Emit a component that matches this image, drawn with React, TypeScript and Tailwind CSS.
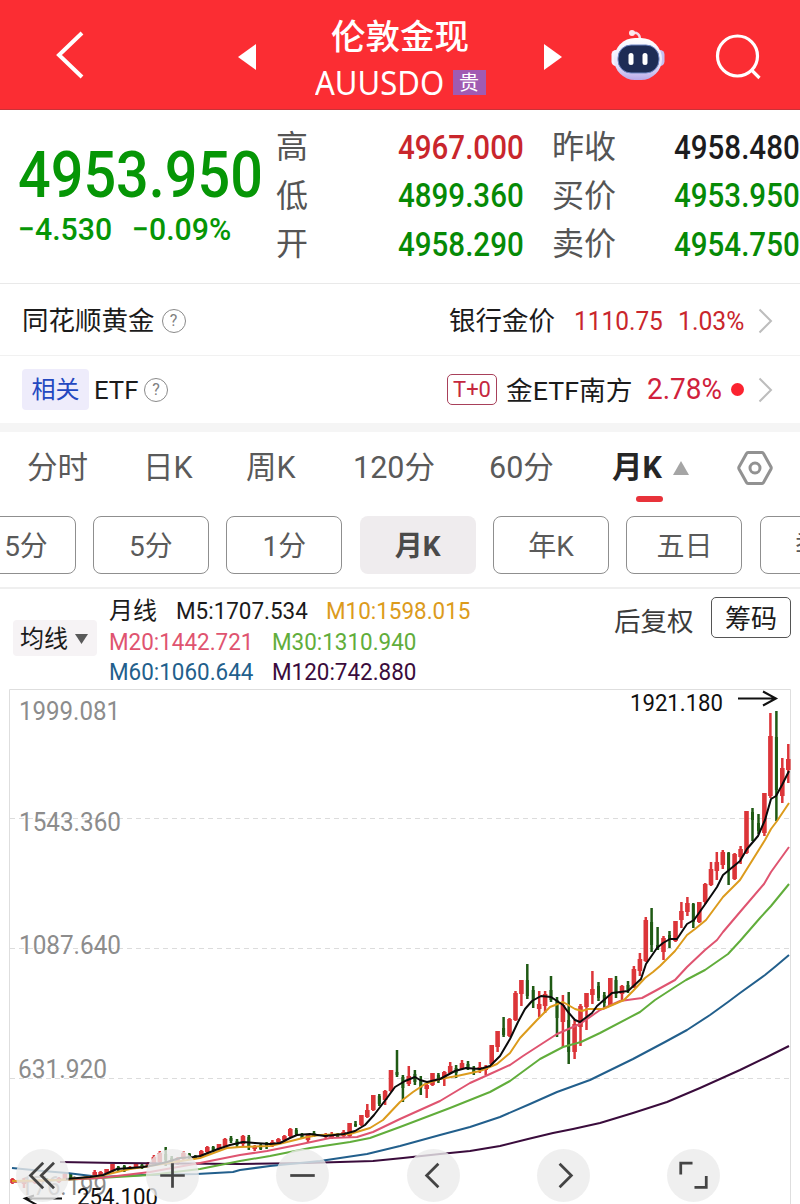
import React from "react";

type Candle = [number, number, number, number, number, "r" | "g"];

// x, high, body top, body bottom, low, direction
const candles: Candle[] = [
  [788.3, 744, 759, 770, 783, "r"], [782.3, 758, 768, 796, 803, "r"], [776.4, 711, 737, 790, 821, "g"],
  [770.4, 713, 736, 796, 798, "r"], [764.4, 793, 793, 833, 836, "r"], [758.5, 814, 823, 831, 834, "g"],
  [752.5, 808, 812, 820, 841, "g"], [746.5, 811, 811, 853, 854, "r"], [740.6, 846, 849, 857, 864, "r"],
  [734.6, 853, 854, 879, 880, "r"], [728.6, 852, 853, 870, 885, "g"], [722.8, 850, 852, 865, 869, "r"],
  [716.8, 852, 862, 871, 880, "r"], [711, 862, 869, 885, 886, "r"], [705.2, 883, 884, 902, 904, "r"],
  [699.3, 902, 902, 922, 923, "r"], [693.3, 903, 904, 922, 928, "g"], [687.4, 897, 903, 912, 916, "r"],
  [681.4, 902, 911, 920, 928, "r"], [675.5, 921, 921, 941, 942, "r"], [669.5, 931, 935, 940, 948, "g"],
  [663.5, 936, 938, 952, 960, "r"], [657.6, 927, 945, 950, 950, "g"], [651.6, 908, 922, 945, 952, "g"],
  [645.8, 917, 920, 961, 962, "r"], [639.9, 953, 959, 971, 976, "r"], [633.9, 966, 969, 987, 988, "r"],
  [628, 981, 985, 990, 993, "g"], [622, 985, 986, 994, 1000, "r"], [616, 976, 980, 994, 998, "g"],
  [610.3, 978, 978, 1005, 1006, "r"], [604.3, 992, 995, 1003, 1008, "g"], [598.5, 982, 986, 998, 1001, "g"],
  [592.4, 971, 989, 995, 1004, "r"], [586.5, 993, 993, 1007, 1030, "r"], [580.5, 1004, 1006, 1027, 1046, "r"],
  [574.6, 1020, 1024, 1052, 1059, "r"], [568.7, 992, 1020, 1052, 1064, "g"], [562.9, 995, 1005, 1022, 1047, "r"],
  [557, 997, 1000, 1018, 1037, "g"], [551, 976, 990, 1000, 1002, "g"], [545.1, 991, 994, 1006, 1013, "r"],
  [539.2, 991, 1004, 1009, 1017, "r"], [533.2, 986, 990, 1000, 1008, "g"], [527.3, 964, 980, 996, 999, "g"],
  [521.4, 980, 980, 994, 1006, "r"], [515.5, 991, 993, 1020, 1021, "r"], [509.5, 1018, 1019, 1036, 1037, "r"],
  [503.6, 1017, 1028, 1035, 1037, "g"], [497.6, 1031, 1031, 1047, 1052, "r"], [491.7, 1045, 1045, 1064, 1065, "r"],
  [485.7, 1065, 1067, 1070, 1075, "r"], [479.8, 1062, 1067, 1069, 1073, "r"], [473.8, 1066, 1068, 1072, 1075, "g"],
  [468, 1061, 1064, 1068, 1070, "g"], [462, 1060, 1063, 1069, 1070, "r"], [456.1, 1065, 1068, 1073, 1078, "g"],
  [450.2, 1062, 1066, 1073, 1074, "r"], [444.3, 1071, 1072, 1077, 1086, "r"], [438.4, 1073, 1075, 1081, 1083, "g"],
  [432.5, 1073, 1073, 1085, 1086, "r"], [426.7, 1083, 1085, 1089, 1098, "r"], [420.8, 1076, 1080, 1088, 1095, "g"],
  [414.9, 1070, 1074, 1082, 1085, "g"], [408.8, 1066, 1076, 1084, 1086, "r"], [402.9, 1075, 1077, 1088, 1102, "g"],
  [397, 1050, 1072, 1075, 1077, "g"], [391, 1070, 1070, 1091, 1092, "r"], [385.1, 1090, 1091, 1100, 1105, "r"],
  [379.3, 1094, 1096, 1104, 1106, "g"], [373.3, 1095, 1095, 1110, 1111, "r"], [367.3, 1104, 1110, 1117, 1118, "r"],
  [361.4, 1115, 1115, 1125, 1126, "r"], [355.5, 1121, 1124, 1126, 1127, "g"], [349.6, 1123, 1123, 1136, 1137, "r"],
  [343.6, 1130, 1132, 1136, 1137, "r"], [337.7, 1133, 1134, 1137, 1138, "g"], [331.7, 1132, 1134, 1138, 1139, "r"],
  [325.7, 1133, 1134, 1137, 1138, "r"], [314, 1131, 1133, 1136, 1137, "g"], [308, 1134, 1135, 1140, 1142, "r"],
  [302, 1133, 1134, 1138, 1139, "g"], [296.3, 1128, 1130, 1134, 1136, "g"], [290.3, 1128, 1129, 1136, 1137, "r"],
  [284.4, 1135, 1136, 1140, 1142, "r"], [278.4, 1138, 1139, 1142, 1143, "r"], [272.4, 1140, 1142, 1146, 1147, "r"],
  [266.6, 1142, 1143, 1147, 1149, "g"], [260.7, 1144, 1145, 1149, 1150, "g"], [254.7, 1145, 1146, 1149, 1151, "r"],
  [248.8, 1135, 1137, 1146, 1150, "g"], [243, 1135, 1136, 1144, 1146, "r"], [237, 1139, 1141, 1145, 1147, "g"],
  [231, 1136, 1138, 1141, 1143, "g"], [225, 1138, 1139, 1146, 1147, "r"], [219, 1144, 1144, 1149, 1151, "r"],
  [213.2, 1146, 1147, 1150, 1152, "g"], [207.3, 1146, 1147, 1152, 1154, "r"], [201.3, 1150, 1151, 1156, 1157, "r"],
  [195.4, 1155, 1156, 1158, 1159, "g"], [189.4, 1153, 1154, 1157, 1159, "g"], [183.4, 1151, 1153, 1159, 1161, "r"],
  [177.6, 1157, 1158, 1163, 1165, "r"], [171.7, 1156, 1158, 1163, 1167, "g"], [165.7, 1147, 1154, 1160, 1166, "g"],
  [159.8, 1151, 1153, 1162, 1164, "r"], [153.9, 1155, 1157, 1165, 1166, "r"], [148, 1162, 1163, 1166, 1168, "r"],
  [142, 1164, 1165, 1168, 1169, "g"], [136, 1163, 1164, 1168, 1169, "r"], [130, 1166, 1167, 1169, 1170, "r"],
  [124.3, 1165, 1166, 1169, 1172, "g"], [118.3, 1166, 1167, 1169, 1171, "g"], [112.5, 1164, 1164, 1171, 1172, "r"],
  [106.6, 1169, 1169, 1173, 1174, "r"], [100.6, 1171, 1172, 1175, 1176, "r"], [94.7, 1170, 1172, 1175, 1176, "r"],
  [88.7, 1175, 1176, 1178, 1179, "r"], [70.8, 1173, 1174, 1179, 1180, "g"], [64.9, 1172, 1174, 1179, 1181, "r"],
  [58.9, 1177, 1178, 1182, 1183, "r"], [47, 1178, 1179, 1182, 1183, "g"], [35, 1179, 1180, 1183, 1184, "r"],
  [24, 1178, 1180, 1184, 1188, "r"], [12.5, 1178, 1179, 1183, 1184, "r"],
];

const averages = [
  {
    color: "#3a0c3c",
    points:
      "60,1162 117,1163 240,1164 307,1163 373,1161 403,1158 440,1154 470,1151 500,1146 528,1139 553,1133 573,1129 600,1123 633,1113 667,1102 700,1088 740,1070 765,1058 775,1053 789,1046",
  },
  {
    color: "#225f8c",
    points:
      "12,1168 43,1171 67,1173 100,1177 143,1175 197,1174 233,1172 240,1170 270,1166 320,1161 367,1154 400,1146 440,1135 470,1127 500,1117 530,1104 557,1092 590,1080 633,1059 665,1042 687,1030 710,1015 728,1002 740,993 765,975 776,966 789,955",
  },
  {
    color: "#61ad3b",
    points:
      "12,1182 60,1180 100,1178 150,1175 200,1169 240,1161 270,1156 310,1148 350,1142 370,1138 400,1127 450,1108 470,1100 490,1092 510,1081 525,1070 540,1059 563,1047 581,1042 600,1033 640,1012 655,1000 675,987 686,980 705,970 728,954 740,941 760,918 771,906 789,884",
  },
  {
    color: "#df5470",
    points:
      "12,1182 100,1178 150,1172 200,1163 240,1155 267,1151 297,1145 330,1138 357,1137 373,1132 400,1119 440,1101 470,1083 490,1074 510,1065 523,1056 540,1045 557,1034 580,1024 600,1010 620,1001 642,998 655,991 675,980 687,967 705,950 717,940 723,932 740,912 764,884 771,872 789,847",
  },
  {
    color: "#dc9b1c",
    points:
      "12,1181 60,1180 100,1176 130,1169 150,1166 175,1162 200,1158 227,1148 240,1147 270,1146 283,1143 307,1137 320,1135 350,1134 370,1128 383,1120 400,1102 413,1092 425,1084 440,1079 457,1076 480,1071 497,1064 510,1053 520,1038 537,1020 550,1007 563,1002 575,1009 582,1011 588,1009 603,1009 624,1000 633,991 645,978 653,972 660,966 675,951 687,935 695,929 706,920 723,897 740,880 765,840 771,829 777,821 789,803",
  },
  {
    color: "#0b0b0b",
    points:
      "66,1179 90,1177 103,1175 117,1169 143,1167 155,1165 167,1162 180,1158 193,1157 200,1156 218,1149 230,1145 243,1142 255,1143 270,1144 280,1143 290,1138 297,1135 310,1134 325,1136 344,1134 355,1131 365,1125 374,1115 387,1098 395,1087 405,1081 415,1077 420,1080 427,1082 440,1079 455,1071 466,1068 480,1069 490,1066 500,1056 510,1039 518,1022 525,1009 532,1001 541,996 551,997 557,1001 563,1005 568,1012 575,1020 580,1022 592,1013 597,1006 612,993 628,991 641,979 646,964 657,948 663,943 670,939 677,939 687,924 694,920 706,903 717,887 723,875 740,861 747,849 758,836 765,820 771,799 776,796 782,785 789,771",
  },
];

const tabs = ["分时", "日K", "周K", "120分", "60分"];
const periods = ["5分", "5分", "1分", "月K", "年K", "五日", "季K"];

const quotes = [
  ["高", "4967.000", "text-[#c9262c]", "昨收", "4958.480", "text-[#1c1c1e]"],
  ["低", "4899.360", "text-[#068a06]", "买价", "4953.950", "text-[#068a06]"],
  ["开", "4958.290", "text-[#068a06]", "卖价", "4954.750", "text-[#068a06]"],
];

const Header = () => (
  <header className="flex h-[110px] items-center border-b border-[#c83238] bg-[#fb2d33] text-white">
    <svg className="ml-[54px]" width="32" height="50" viewBox="0 0 32 50" fill="none" stroke="white" strokeWidth="4">
      <path d="M28 3 5 25l23 22" />
    </svg>
    <svg className="ml-[152px] mt-1" width="18" height="26" viewBox="0 0 18 26" fill="white">
      <path d="M0 13 18 0v26z" />
    </svg>
    <div className="flex w-[288px] flex-col items-center pt-[10px]">
      <h1 className="h-[46px] text-[34.500px] leading-[46px] font-medium">伦敦金现</h1>
      <div className="flex h-[46px] items-center gap-[9px]">
        <span className="w-[129px] text-[32px] leading-none font-['Noto_Sans','Noto_Sans_CJK_SC',sans-serif]">
          <span className="inline-block origin-left scale-x-[0.97]">AUUSDO</span>
        </span>
        <span className="flex h-[25px] w-[33px] items-center justify-center bg-[#a05bb2] text-[20px]">贵</span>
      </div>
    </div>
    <svg className="mt-1" width="18" height="26" viewBox="0 0 18 26" fill="white">
      <path d="M18 13 0 0v26z" />
    </svg>
    <Robot />
    <svg className="ml-[48px] mt-[3px]" width="48" height="48" viewBox="0 0 48 48" fill="none" stroke="white" strokeWidth="3.2">
      <circle cx="23.500" cy="24" r="20" />
      <path d="m37 37.500 8.500 8.500" />
    </svg>
  </header>
);

const Robot = () => (
  <svg className="ml-[48px]" width="56" height="54" viewBox="0 0 56 54">
    <defs>
      <linearGradient id="shell" x1="0" y1="0" x2="0" y2="1">
        <stop offset="0" stopColor="#fff" />
        <stop offset="0.65" stopColor="#e6e2fa" />
        <stop offset="1" stopColor="#b7a8e8" />
      </linearGradient>
    </defs>
    <path d="M22 5c5-1 8 1 8 7" fill="none" stroke="#f3dcea" strokeWidth="2.500" />
    <circle cx="22" cy="5" r="3" fill="#fde9ee" />
    <rect x="1.500" y="22" width="9" height="16" rx="4.500" fill="#f4f2ff" />
    <rect x="45.500" y="22" width="9" height="16" rx="4.500" fill="#c5bff0" />
    <rect x="4" y="10" width="48" height="42" rx="21" fill="url(#shell)" />
    <rect x="8" y="17" width="41" height="28" rx="13" fill="#1e2c55" stroke="#6f86c4" strokeWidth="1" />
    <rect x="18.500" y="25" width="5" height="12" rx="2.500" fill="white" />
    <rect x="32.500" y="25" width="5" height="12" rx="2.500" fill="white" />
  </svg>
);

const Help = () => (
  <span className="flex h-6 w-6 items-center justify-center rounded-full border border-[#8a8a8a] text-[16px] leading-none text-[#808080]">
    ?
  </span>
);

const Arrow = () => (
  <svg width="15" height="26" viewBox="0 0 15 26" fill="none" stroke="#bdbdbd" strokeWidth="2">
    <path d="m1.500 1.500 11.500 11.500-11.500 11.500" />
  </svg>
);

const Quote = () => (
  <section className="flex h-[174px] border-b border-[#e9e9e9]">
    <div className="w-[276px] pl-[18px] font-medium text-[#069606]">
      <div className="mt-[25px] h-[78px] pt-[1px] text-[65px] leading-[78px]">
        <span className="inline-block origin-left scale-x-[0.885]">4953.950</span>
      </div>
      <div className="flex h-[34px] text-[31.500px] leading-[34px]">
        <span className="w-[114px]">
          <span className="inline-block origin-left scale-x-[0.96]">−4.530</span>
        </span>
        <span className="inline-block origin-left scale-x-[0.96]">−0.09%</span>
      </div>
    </div>
    <div className="flex flex-col pt-[13px]">
      {quotes.map(([a, av, ac, b, bv, bc]) => (
        <div key={a} className="flex h-[48.500px] items-center text-[32px] text-[#555]">
          <span className="w-[122px]">{a}</span>
          <span className={`w-[126px] text-[33px] font-medium ${ac}`}>
            <span className="inline-block origin-left scale-x-[0.895]">{av}</span>
          </span>
          <span className="ml-[28px] w-[122px]">{b}</span>
          <span className={`w-[126px] text-[33px] font-medium ${bc}`}>
            <span className="inline-block origin-left scale-x-[0.895]">{bv}</span>
          </span>
        </div>
      ))}
    </div>
  </section>
);

const Related = () => (
  <section className="border-b-[9px] border-[#f5f5f5]">
    <div className="flex h-[72px] items-center border-b border-[#f1f1f1] pt-[2px] pr-[27px] pl-[22px] text-[26.500px] text-[#1b1b1b]">
      <span className="mr-[7px]">同花顺黄金</span>
      <Help />
      <span className="ml-auto">银行金价</span>
      <span className="ml-[19px] w-[104px] pt-[2px] text-[26px] text-[#c9262c]">
        <span className="inline-block origin-left scale-x-[0.94]">1110.75</span>
      </span>
      <span className="w-[67px] pt-[2px] text-[26px] text-[#c9262c]">
        <span className="inline-block origin-left scale-x-[0.95]">1.03%</span>
      </span>
      <span className="ml-[13px]">
        <Arrow />
      </span>
    </div>
    <div className="flex h-[67px] items-center pr-[27px] pl-[22px] text-[26.500px] text-[#1b1b1b]">
      <span className="mr-[5px] flex h-[41px] w-[67px] items-center justify-center rounded bg-[#eeecfb] pt-[1px] text-[24px] text-[#2448c0]">
        相关
      </span>
      <span className="mr-[5px] w-[45px] pt-[1px]">
        <span className="inline-block origin-left scale-x-[0.97]">ETF</span>
      </span>
      <Help />
      <span className="mr-[9px] ml-auto flex h-[31px] w-[50px] items-center justify-center rounded-[5px] border border-[#a8405a] text-[22px] text-[#c5283f]">
        T+0
      </span>
      <span className="w-[127px] pt-[2px]">
        <span className="inline-block origin-left scale-x-[1.01] whitespace-nowrap">金ETF南方</span>
      </span>
      <span className="ml-[14px] w-[84px] text-[29px] text-[#d0213c]">
        <span className="inline-block origin-left scale-x-[0.965]">2.78%</span>
      </span>
      <span className="mr-[14px] h-[13px] w-[13px] rounded-full bg-[#fb2330]" />
      <Arrow />
    </div>
  </section>
);

const Tabs = () => (
  <nav className="grid h-[84px] grid-cols-[116px_103px_107px_136px_123px_125px_36px] pt-[10px] pl-[27px] text-[30.500px] leading-[52px] text-[#5a5a5a]">
    {tabs.map((tab) => (
      <span key={tab}>{tab}</span>
    ))}
    <div>
      <div className="flex items-center">
        <span className="w-[61px] font-bold text-[#262626]">月K</span>
        <svg width="16" height="14" viewBox="0 0 16 14" fill="#a5a5a5">
          <path d="m8 0 8 14H0z" />
        </svg>
      </div>
      <div className="mt-[2px] ml-[24px] h-[6px] w-[27px] rounded-full bg-[#e8323a]" />
    </div>
    <svg className="mt-[8px]" width="36" height="36" viewBox="0 0 36 36" fill="none" stroke="#929292" strokeWidth="3">
      <path d="M11 2.500h14q1 0 1.500 1L34 17q.5 1 0 2l-7.500 13.500q-.5 1-1.500 1H11q-1 0-1.500-1L2 19q-.5-1 0-2L9.500 3.500q.5-1 1.500-1z" />
      <circle cx="18" cy="18" r="5" />
    </svg>
  </nav>
);

const Periods = () => (
  <div className="h-[73px] overflow-hidden border-b-2 border-[#efefef]">
    <div className="-ml-[40.500px] flex w-max gap-[17.400px] text-[28px] text-[#5a5a5a]">
      {periods.map((p, i) => (
        <button
          key={i}
          className={
            i === 3
              ? "h-[58px] w-[116px] rounded-lg bg-[#efecee] pt-[3px] font-bold text-[#4a4a4a]"
              : `h-[58px] w-[116px] rounded-lg border border-[#8f8f8f] pt-[3px] ${i === 0 ? "pl-[17px]" : ""}`
          }
        >
          {p}
        </button>
      ))}
    </div>
  </div>
);

const Legend = () => (
  <div className="flex h-[100px] pl-[13px] text-[24px] text-[#1b1b1b]">
    <div className="mt-[31px] flex h-[36px] w-[84px] items-center gap-[7px] rounded bg-[#f6f3f5] pt-[1px] pl-[7px]">
      <span>均线</span>
      <svg width="13" height="10" viewBox="0 0 13 10" fill="#595959">
        <path d="M0 0h13L6.500 10z" />
      </svg>
    </div>
    <div className="ml-[12px] w-[400px] pt-[7px] leading-[30.500px]">
      <div className="flex">
        <span className="w-[67px]">月线</span>
        <span className="w-[150px]">
          <span className="inline-block origin-left scale-x-[0.935]">M5:1707.534</span>
        </span>
        <span className="inline-block origin-left scale-x-[0.935] text-[#dc9b1c]">M10:1598.015</span>
      </div>
      <div className="flex">
        <span className="w-[163px] text-[#df5470]">
          <span className="inline-block origin-left scale-x-[0.935]">M20:1442.721</span>
        </span>
        <span className="inline-block origin-left scale-x-[0.935] text-[#61ad3b]">M30:1310.940</span>
      </div>
      <div className="flex">
        <span className="w-[163px] text-[#225f8c]">
          <span className="inline-block origin-left scale-x-[0.935]">M60:1060.644</span>
        </span>
        <span className="inline-block origin-left scale-x-[0.935] text-[#3a0c3c]">M120:742.880</span>
      </div>
    </div>
    <span className="mt-[13px] ml-[105px] w-[80px] text-[26.500px] leading-[40px] text-[#3c3c3c]">后复权</span>
    <button className="mt-[8px] ml-[17px] h-[41px] w-[80px] rounded-[5px] border border-[#555] pt-[2px] text-[26px] leading-none">
      筹码
    </button>
  </div>
);

const Chart = () => (
  <svg className="block" width="800" height="515" viewBox="0 689 800 515">
    <path d="M9.500 1204V689.500H790.500V1204" fill="none" stroke="#dedede" />
    <g stroke="#dcdcdc" strokeDasharray="5 4">
      <path d="M10 818.500H790M10 948.500H790M10 1078.500H790" />
    </g>
    <g fill="#8c8c8c" fontSize="25.500">
      <text x="19" y="720" textLength="101" lengthAdjust="spacingAndGlyphs">1999.081</text>
      <text x="19" y="831" textLength="102" lengthAdjust="spacingAndGlyphs">1543.360</text>
      <text x="19" y="954" textLength="102" lengthAdjust="spacingAndGlyphs">1087.640</text>
      <text x="18" y="1078" textLength="89" lengthAdjust="spacingAndGlyphs">631.920</text>
      <text x="20" y="1195" textLength="87" lengthAdjust="spacingAndGlyphs">176.199</text>
    </g>
    {candles.map(([x, high, top, bottom, low, dir]) => (
      <g key={x} fill={dir === "r" ? "#dc3539" : "#1f5a14"}>
        <rect x={x - 1.25} y={high} width="2.500" height={low - high} />
        <rect
          x={dir === "r" ? x - 2.3 : x - 1.5}
          y={top}
          width={dir === "r" ? 4.6 : 3}
          height={bottom - top}
        />
      </g>
    ))}
    {averages.map((line) => (
      <polyline
        key={line.color}
        points={line.points}
        fill="none"
        stroke={line.color}
        strokeWidth="2"
        strokeLinejoin="round"
      />
    ))}
    <g fill="none" stroke="#111" strokeWidth="2">
      <path d="M738 698.500h38M763 691.500l13 7-13 7" />
      <path d="M62 1198.500H25M37 1205l-12-6.500 9-3" />
    </g>
    <g fill="#111" fontSize="24">
      <text x="630" y="711" textLength="93" lengthAdjust="spacingAndGlyphs">1921.180</text>
      <text x="77" y="1205" textLength="81" lengthAdjust="spacingAndGlyphs">254.100</text>
    </g>
  </svg>
);

const controls = [
  "M42 14 29 27l13 13M53 14 40 27l13 13",
  "M14.500 27h25M27 14.500v25",
  "M14.500 27h25",
  "M32 15 20 27l12 12",
  "M23 15l12 12-12 12",
  "M14 26V14.500h12M28 39h12V27.500",
];

const Controls = () => (
  <div className="absolute bottom-[2px] left-[16px] flex gap-[77.200px]">
    {controls.map((d, i) => (
      <button key={i} className="h-[53px] w-[53px] rounded-full bg-[#ebebeb]/80">
        <svg
          className={i === 0 ? "-ml-[14px]" : ""}
          width="53"
          height="53"
          viewBox="0 0 54 54"
          fill="none"
          stroke="#444"
          strokeWidth="2.800"
        >
          <path d={d} />
        </svg>
      </button>
    ))}
  </div>
);

const App = () => {
  return (
    <main className="relative h-[1204px] w-[800px] overflow-hidden bg-white font-[Roboto,'Noto_Sans_CJK_SC',sans-serif]">
      <Header />
      <Quote />
      <Related />
      <Tabs />
      <Periods />
      <Legend />
      <Chart />
      <Controls />
    </main>
  );
};

export default App;
